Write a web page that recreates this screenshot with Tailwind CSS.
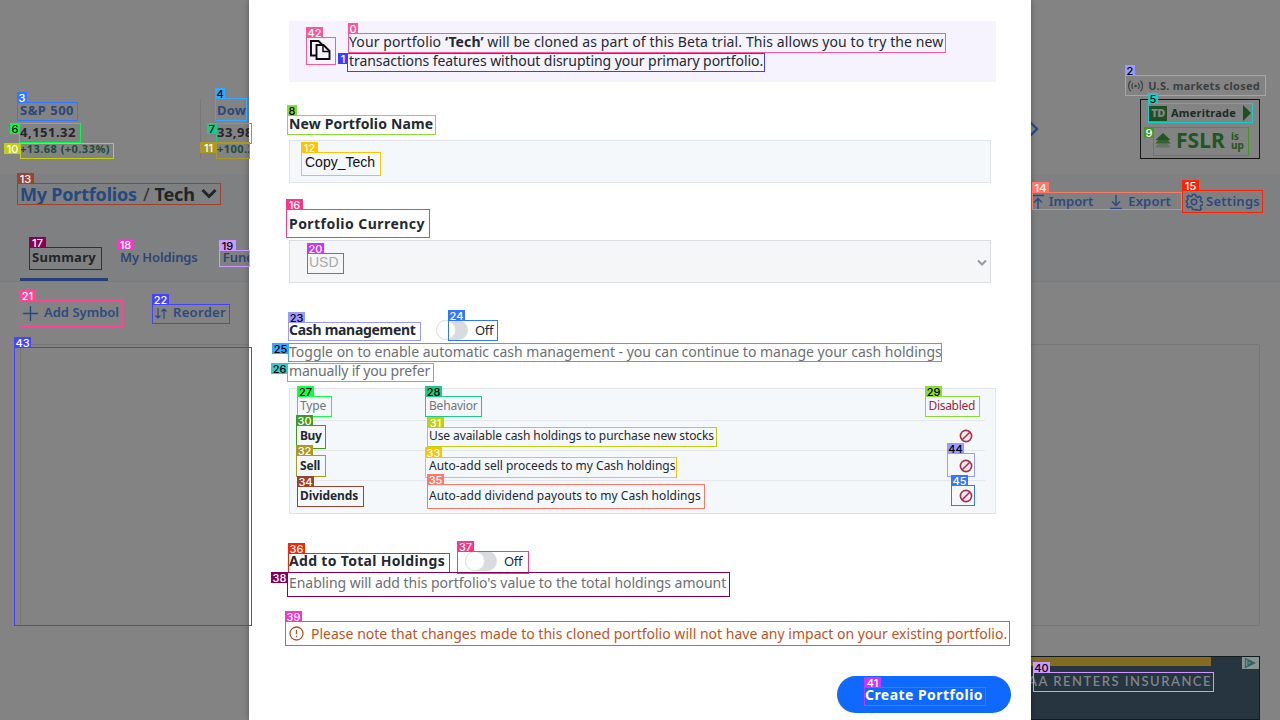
<!DOCTYPE html>
<html lang="en">
<head>
<meta charset="utf-8">
<title>Clone portfolio</title>
<script src="https://cdn.jsdelivr.net/npm/@tailwindcss/browser@4"></script>
</head>
<body class="relative h-[720px] w-[1280px] overflow-hidden bg-[#838383] font-['Noto_Sans',sans-serif] text-[#232a31]">

<!-- page behind the dialog -->
<div class="flex h-[720px] flex-col">
  <header class="flex h-[174px] justify-between px-5">
    <div class="flex pt-[99px]">
      <div class="flex h-[60px] w-[181px] flex-col border-r border-[#777] whitespace-nowrap font-bold">
        <span class="h-[23px] self-start text-[13px] leading-[23px] tracking-[0.47px] text-[#2c4779]">S&amp;P 500</span>
        <span class="h-[21px] self-start text-[13px] leading-[21px] tracking-[0.5px] text-[#242629]">4,151.32</span>
        <span class="h-4 self-start text-[11px] leading-[12px] tracking-[0.46px] text-[#1c4c39]">+13.68 (+0.33%)</span>
      </div>
      <div class="ml-4 flex flex-col whitespace-nowrap font-bold">
        <span class="h-[23px] self-start text-[13px] leading-[23px] tracking-[0.2px] text-[#2c4779]">Dow 30</span>
        <span class="h-[21px] self-start text-[13px] leading-[21px] tracking-[0.5px] text-[#242629]">33,981.3</span>
        <span class="h-4 self-start text-[11px] leading-[12px] tracking-[0.46px] text-[#1c4c39]">+100.26 (+0.3%)</span>
      </div>
    </div>
    <div class="flex items-start">
      <svg class="mt-[121px] mr-[100px] h-4 w-3" viewBox="0 0 12 16" fill="none" stroke="#234a91" stroke-width="2.4"><path d="M2 1l7 7-7 7"/></svg>
      <div class="flex w-[120px] flex-col pt-[76px]">
        <div class="-ml-3 flex h-5 items-center whitespace-nowrap">
          <svg class="h-3.5 w-4" viewBox="0 0 16 14" fill="none" stroke="#3c3f42" stroke-width="1.2"><circle cx="8" cy="7" r="1.4" fill="#3c3f42" stroke="none"/><path d="M5.3 4a4.2 4.2 0 0 0 0 6M10.700 4a4.200 4.200 0 0 1 0 6M3 1.500a7.500 7.500 0 0 0 0 11M13 1.500a7.500 7.500 0 0 1 0 11"/></svg>
          <span class="ml-[5px] text-[11px] font-bold tracking-[0.26px] text-[#3c3f42]">U.S. markets closed</span>
        </div>
        <div class="mt-[3px] h-[60px] w-[120px] border border-[#151515] pt-1 pl-2">
          <div class="flex h-[18px] items-center">
            <div class="flex h-[15px] w-[18px] items-center justify-center bg-[#1d4f23] text-[11px] font-black tracking-tighter text-[#858585]">TD</div>
            <span class="ml-1 text-[11px] font-bold tracking-[0.23px] text-[#1c2b22]">Ameritrade</span>
            <svg class="mr-2 ml-auto h-4 w-2" viewBox="0 0 8 16" fill="#1b5021"><path d="M0 0l8 8-8 8z"/></svg>
          </div>
          <div class="flex h-[38px] items-center text-[#20561f]">
            <svg class="ml-1.5 h-4 w-4" viewBox="0 0 16 16" fill="#20561f"><path d="M8 0l7.500 7H.5z"/><path d="M3 7h10l2.500 3.500H.5z" opacity=".75"/><path d="M3 10.500h10l2.500 4H.5z" opacity=".3"/></svg>
            <span class="ml-[5px] text-[21px] font-bold tracking-[0.09px]">FSLR</span>
            <span class="ml-[6px] text-[10px] leading-[9px] font-bold">is<br>up</span>
          </div>
        </div>
      </div>
    </div>
  </header>

  <section class="flex h-[108px] flex-col border-b border-[#7b7b7b] bg-[#7f8082] px-5">
    <div class="flex h-10 justify-between pt-1.5">
      <div class="flex h-7 items-center whitespace-nowrap text-[18px] font-bold">
        <span class="tracking-[-0.2px] text-[#254880]">My Portfolios</span>
        <span class="ml-[6px] font-normal text-[#333]">/</span>
        <span class="ml-[5px] tracking-[-0.2px] text-[#222528]">Tech</span>
        <svg class="ml-[6px] h-3 w-4" viewBox="0 0 16 12" fill="none" stroke="#222528" stroke-width="3"><path d="M1.500 2l6.500 6.500L14.500 2"/></svg>
      </div>
      <div class="flex h-[43px] items-center whitespace-nowrap text-[13px] font-semibold text-[#2c4a80]">
        <svg class="h-4 w-4" viewBox="0 0 16 16" fill="none" stroke="#2c4a80" stroke-width="1.500"><path d="M2 1.500h12M8 15V5M4 8.500l4-4 4 4"/></svg>
        <span class="ml-[3px]">Import</span>
        <svg class="ml-[15px] h-4 w-4" viewBox="0 0 16 16" fill="none" stroke="#2c4a80" stroke-width="1.500"><path d="M2 14.500h12M8 1v10M4 7.500l4 4 4-4"/></svg>
        <span class="ml-1 tracking-[0.2px]">Export</span>
        <svg class="ml-[14px] h-[18px] w-[18px]" viewBox="0 0 24 24" fill="none" stroke="#2c4a80" stroke-width="2"><circle cx="12" cy="12" r="3.600"/><path d="M10 2h4l.8 3 2 .9 2.700-1.500 2.300 2.300-1.500 2.700.9 2 3 .8v3.600l-3 .8-.9 2 1.500 2.700-2.300 2.300-2.700-1.500-2 .9L14 22h-4l-.8-2.900-2-.9-2.700 1.500-2.300-2.300 1.500-2.700-.9-2-.8-.2V10l1.200-.4.9-2L2.700 5.200 4.800 3.300l2.500 1.700 2-.9z"/></svg>
        <span class="ml-[3px] tracking-[0.27px]">Settings</span>
      </div>
    </div>
    <div class="mt-[26px] flex h-[42px] whitespace-nowrap text-[13px] leading-[34px] font-semibold text-[#2c4674]">
      <div class="flex w-[88px] border-b-3 border-[#273f74] pl-3"><span class="self-start font-bold tracking-[0.29px] text-[#222528]">Summary</span></div>
      <span class="ml-3 self-start tracking-[-0.1px]">My Holdings</span>
      <span class="ml-[25px] self-start">Fundamentals</span>
    </div>
  </section>

  <div class="flex h-[62px] items-center px-5 whitespace-nowrap text-[13px] font-semibold text-[#2c4a80]">
    <svg class="ml-[3px] h-[15px] w-[15px]" viewBox="0 0 15 15" fill="none" stroke="#234a80" stroke-width="1.400"><path d="M7.500 0v15M0 7.500h15"/></svg>
    <span class="ml-1.5">Add Symbol</span>
    <svg class="ml-9 h-[11px] w-3" viewBox="0 0 12 11" fill="none" stroke="#2c4a80" stroke-width="1.200"><path d="M3 0v10M.5 7.500L3 10l2.500-2.500M9 11V1M6.500 3.500L9 1l2.500 2.500"/></svg>
    <span class="ml-[6px] tracking-[0.32px]">Reorder</span>
  </div>
  <div class="mx-5 h-[282px] rounded-xs border border-[#777]"></div>
  <div class="mt-[30px] mr-5 ml-[960px] h-16 border border-[#111b20] bg-[#273540]">
    <div class="flex h-[9px] justify-between"><div class="h-[9px] w-[250px] bg-[#836b22]"></div>
      <svg class="h-3 w-[17px] bg-[#8b9391]" viewBox="0 0 17 12" fill="none" stroke="#2f6468" stroke-width="1.300"><path d="M3.500 1.500v9l9-4.500zM6 4v4l4-2z"/></svg></div>
    <div class="flex h-8 items-center justify-end pr-[47px] font-['Lato',sans-serif] text-[13px] font-semibold tracking-[1.5px] whitespace-nowrap text-[#7d868b]">USAA RENTERS INSURANCE</div>
  </div>
</div>

<!-- dialog -->
<main class="absolute top-0 left-[249px] flex h-[720px] w-[782px] flex-col bg-white pt-[21px] pr-5 pl-10 shadow-[0_0_6px_rgba(0,0,0,0.35)]">
  <div class="flex h-[61px] w-[707px] bg-[#f6f3ff] pt-[11px] pl-5">
    <svg class="mt-[7px] h-[22px] w-[22px]" viewBox="0 0 22 22" fill="none" stroke="#0b0b0f" stroke-width="1.900"><path d="M7 16.500H2V2h7.500l3.500 3.500"/><path d="M7.500 6h7l6 6v8h-13z" fill="#f6f3ff"/><path d="M14 6.500V12.500h6.500" stroke-width="1.500"/></svg>
    <p class="ml-[18px] flex flex-col text-[14px] leading-[19px] whitespace-nowrap">
      <span class="self-start tracking-[0.11px]">Your portfolio <b>‘Tech’</b> will be cloned as part of this Beta trial. This allows you to try the new</span>
      <span class="self-start tracking-[-0.06px]">transactions features without disrupting your primary portfolio.</span>
    </p>
  </div>
  <label class="mt-8 h-5 self-start text-[14px] leading-5 font-bold tracking-[0.15px] whitespace-nowrap">New Portfolio Name</label>
  <div class="mt-[6px] flex h-[43px] w-[702px] items-center border border-[#e0e4e9] bg-[#f5f8fa] pt-0.5 pl-[15px] font-['Liberation_Sans',sans-serif] text-[14px] text-[#111]">Copy_Tech</div>
  <label class="mt-[31px] h-5 self-start text-[14px] leading-5 font-bold tracking-[0.46px] whitespace-nowrap">Portfolio Currency</label>
  <div class="mt-[6px] flex h-[43px] w-[702px] items-center justify-between border border-[#dcdee2] bg-[#f5f6f8] pt-0.5 pr-[3px] pl-[19px] font-['Liberation_Sans',sans-serif] text-[14px] text-[#a9a9ab]">USD
    <svg class="h-2 w-[10px]" viewBox="0 0 10 8" fill="none" stroke="#9b9b9d" stroke-width="2"><path d="M1 1.500l4 4 4-4"/></svg></div>
  <div class="mt-[37px] flex h-5 items-center text-[14px] whitespace-nowrap">
    <span class="w-[127px] pb-px font-bold tracking-[-0.3px]">Cash management</span>
    <span class="ml-5 flex h-5 w-8 items-center rounded-full bg-[#d9dbdf]"><i class="h-5 w-5 rounded-full border border-[#e0e2e6] bg-white"></i></span>
    <span class="ml-[7px] pt-0.5 text-[13px] tracking-[-0.3px]">Off</span>
  </div>
  <p class="mt-0.5 flex flex-col text-[14px] leading-[19px] whitespace-nowrap text-[#6b7075]">
    <span class="self-start">Toggle on to enable automatic cash management - you can continue to manage your cash holdings</span>
    <span class="self-start tracking-[-0.16px]">manually if you prefer</span>
  </p>
  <div class="mt-2 flex h-[126px] w-[707px] flex-col border border-[#e0e4e9] bg-[#f5f8fa] px-2.5 text-[12px] whitespace-nowrap">
    <div class="flex h-8 items-center border-b border-[#e3e6ea] pt-[3px] text-[#6e7780]">
      <span class="w-[129px] tracking-[-0.18px]">Type</span><span class="tracking-[-0.2px]">Behavior</span><span class="mr-[10px] ml-auto tracking-[-0.3px] text-[#9b2742]">Disabled</span>
    </div>
    <div class="flex h-[30px] items-center border-b border-[#e3e6ea]">
      <span class="w-[129px] font-bold tracking-[-0.45px]">Buy</span><span class="tracking-[-0.09px]">Use available cash holdings to purchase new stocks</span>
      <svg class="mr-3 ml-auto h-[14px] w-[14px]" viewBox="0 0 14 14" fill="#ffe9ee" stroke="#a0324b" stroke-width="1.600"><circle cx="7" cy="7" r="5.600"/><path d="M3.200 10.800l7.600-7.600"/></svg>
    </div>
    <div class="flex h-[30px] items-center border-b border-[#e3e6ea]">
      <span class="w-[129px] font-bold tracking-[-0.2px]">Sell</span><span>Auto-add sell proceeds to my Cash holdings</span>
      <svg class="mr-3 ml-auto h-[14px] w-[14px]" viewBox="0 0 14 14" fill="#ffe9ee" stroke="#a0324b" stroke-width="1.600"><circle cx="7" cy="7" r="5.600"/><path d="M3.200 10.800l7.600-7.600"/></svg>
    </div>
    <div class="flex h-[30px] items-center">
      <span class="w-[129px] font-bold tracking-[-0.1px]">Dividends</span><span class="tracking-[0.05px]">Auto-add dividend payouts to my Cash holdings</span>
      <svg class="mr-3 ml-auto h-[14px] w-[14px]" viewBox="0 0 14 14" fill="#ffe9ee" stroke="#a0324b" stroke-width="1.600"><circle cx="7" cy="7" r="5.600"/><path d="M3.200 10.800l7.600-7.600"/></svg>
    </div>
  </div>
  <div class="mt-[37px] flex h-5 items-center text-[14px] whitespace-nowrap">
    <span class="w-[156px] pb-px font-bold tracking-[0.32px]">Add to Total Holdings</span>
    <span class="ml-5 flex h-5 w-8 items-center rounded-full bg-[#d9dbdf]"><i class="h-5 w-5 rounded-full border border-[#e0e2e6] bg-white"></i></span>
    <span class="ml-[7px] pt-0.5 text-[13px] tracking-[-0.3px]">Off</span>
  </div>
  <p class="mt-0.5 flex h-5 text-[14px] leading-5 tracking-[-0.04px] whitespace-nowrap text-[#6b7075]">Enabling will add this portfolio's value to the total holdings amount</p>
  <div class="mt-[30px] flex h-5 items-center text-[14px] whitespace-nowrap text-[#bd5426]">
    <svg class="h-[15px] w-[15px]" viewBox="0 0 15 15" fill="none" stroke="#b4532a" stroke-width="1.300"><circle cx="7.500" cy="7.500" r="6.500"/><path d="M7.500 4v4.300M7.500 9.700v1.500"/></svg>
    <span class="ml-[7px] tracking-[0.01px]">Please note that changes made to this cloned portfolio will not have any impact on your existing portfolio.</span>
  </div>
  <button class="mt-[33px] flex h-[37px] w-[174px] shrink-0 items-center justify-center self-end rounded-full bg-[#0f69ff] text-[14px] font-bold tracking-[0.45px] whitespace-nowrap text-white">Create Portfolio</button>
</main>

<!-- numbered element markers -->
<div id="marks" class="pointer-events-none absolute inset-0"></div>
<script>
// [label, x, y, width, height, colour, dark label text, label on the left]
const marks = [
[0,348,33,598,20,'#ff5599',0,0],[1,347,53,418,19,'#3d3dff',0,1],[2,1125,75,141,21,'#9999ff',1,0],[3,17,102,61,19,'#3377ff',0,0],
[4,215,98,32,23,'#33aaff',1,0],[5,1148,103,105,20,'#19cccc',1,0],[6,19,123,62,20,'#00ff44',1,1],[7,216,123,36,21,'#19cc88',1,1],
[8,287,115,149,20,'#88dd33',1,0],[9,1153,127,96,29,'#449922',0,1],[10,20,143,94,16,'#c0d010',0,1],[11,216,142,34,17,'#aa9922',0,1],
[12,301,152,80,24,'#ffc400',0,0],[13,17,183,204,22,'#994433',0,0],[14,1032,192,150,18,'#ff7766',0,0],[15,1182,190,81,23,'#ff2200',0,0],
[16,286,209,144,29,'#ff3388',0,0],[17,29,247,73,23,'#880055',0,0],[18,117,249,87,19,'#ff33cc',0,0],[19,219,250,31,17,'#cc99ff',1,0],
[20,307,253,37,21,'#cc33ff',0,0],[21,19,300,104,27,'#ff4499',0,0],[22,152,304,78,20,'#4444ff',0,0],[23,288,322,133,19,'#9999ff',1,0],
[24,448,320,50,21,'#3377ff',0,0],[25,288,343,654,19,'#33aaff',1,1],[26,287,363,147,19,'#33cccc',1,1],[27,297,396,35,21,'#11ff44',1,0],
[28,425,396,57,21,'#19cc88',1,0],[29,925,396,55,21,'#88dd33',1,0],[30,296,425,30,24,'#449922',0,0],[31,427,427,290,20,'#c0d010',0,0],
[32,296,455,30,22,'#aa9922',0,0],[33,425,457,252,21,'#ffc400',0,0],[34,297,486,67,21,'#994433',0,0],[35,427,484,278,25,'#ff7766',0,0],
[36,288,553,162,20,'#ff2200',0,0],[37,457,551,72,23,'#ff3388',0,0],[38,287,572,443,25,'#880055',0,1],[39,285,621,725,25,'#ff33cc',0,0],
[40,1033,672,181,20,'#cc99ff',1,0],[41,864,687,122,19,'#cc33ff',0,0],[42,306,37,30,28,'#ff5599',0,0],[43,14,347,238,279,'#4444ff',0,0],
[44,947,453,28,24,'#9999ff',1,0],[45,951,485,24,21,'#3377ff',0,0]];
document.getElementById('marks').innerHTML = marks.map(([n,x,y,w,h,c,d,l]) => {
  const cw = n < 10 ? 10 : 17;
  const lx = l ? x - (n < 10 ? 9 : 16) : x, ly = l ? y : y - 10;
  return `<div class="absolute border" style="left:${x}px;top:${y}px;width:${w}px;height:${h}px;border-color:${c}"></div>
  <div class="absolute h-[11px] text-center font-['Inter',sans-serif] text-[11px] leading-[12px] font-medium ${d ? 'text-black' : 'text-white'}" style="left:${lx}px;top:${ly}px;width:${cw}px;background:${c}">${n}</div>`;
}).join('');
</script>
</body>
</html>
